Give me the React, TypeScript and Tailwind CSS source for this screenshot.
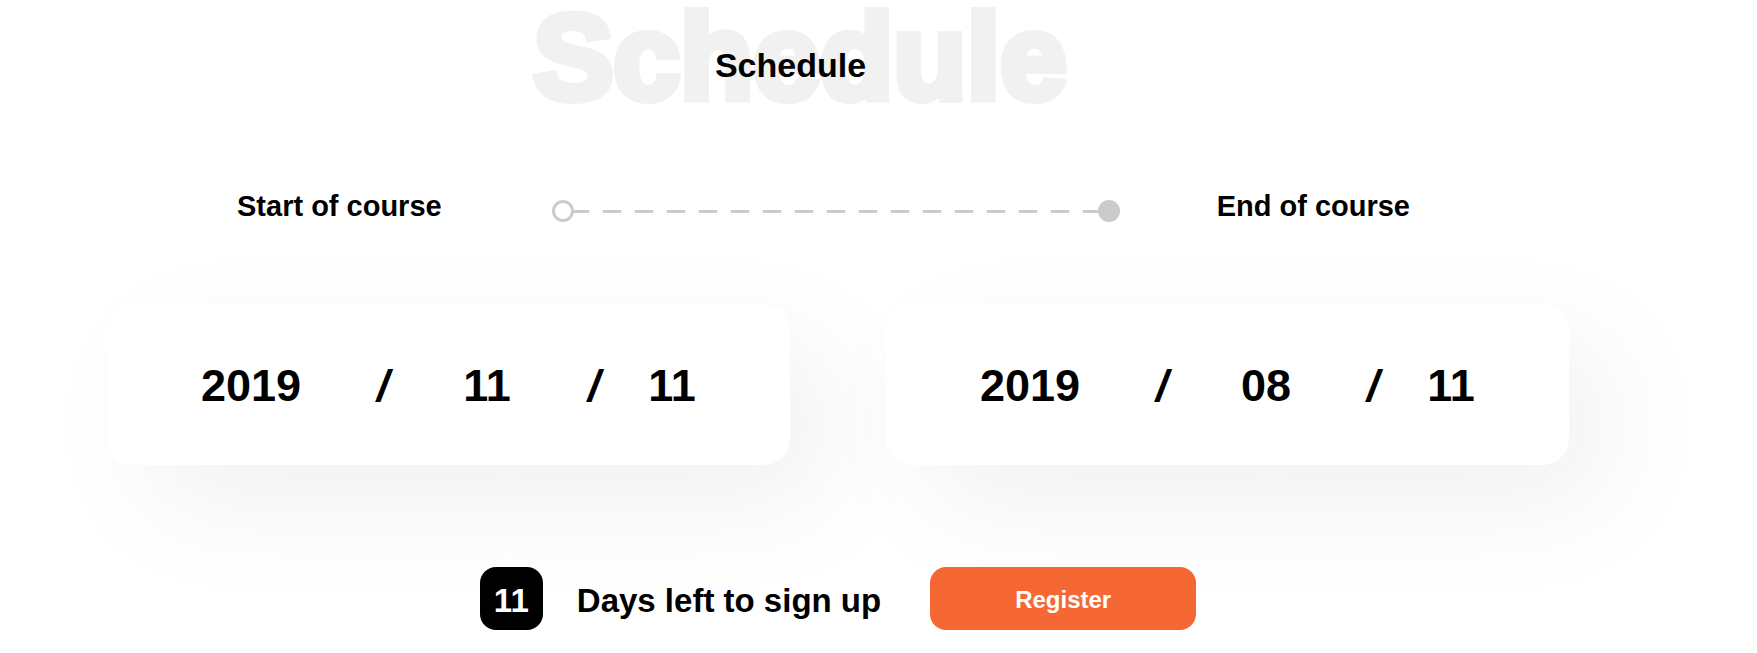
type CourseDate = { id: string; label: string; year: string; month: string; day: string };

const START: CourseDate = { id: "start", label: "Start of course", year: "2019", month: "11", day: "11" };
const END: CourseDate = { id: "end", label: "End of course", year: "2019", month: "08", day: "11" };

function Slash() {
  return <span className="italic">/</span>;
}

function DateCard({ date }: { date: CourseDate }) {
  return (
    <time
      dateTime={`${date.year}-${date.month}-${date.day}`}
      aria-labelledby={date.id}
      className="grid h-[161px] grid-cols-[164fr_100fr_108fr_106fr_50fr] items-center justify-items-center rounded-[26px] bg-white pl-[62px] pr-[93px] pt-[2px] text-[45px] leading-[52px] shadow-[40px_40px_120px_rgba(0,0,0,0.06)]"
    >
      <span>{date.year}</span>
      <Slash />
      <span>{date.month}</span>
      <Slash />
      <span>{date.day}</span>
    </time>
  );
}

function Timeline() {
  return (
    <div className="ml-[110px] mr-[97px] flex flex-1 items-center pt-[9px]" aria-hidden="true">
      <svg className="h-[22px] w-[22px] shrink-0" viewBox="0 0 22 22">
        <circle cx="11" cy="11" r="9.5" fill="none" stroke="#cbcbcb" strokeWidth="3" />
      </svg>
      <svg className="h-[22px] min-w-0 flex-1" width="100%">
        <line x1="-2" y1="11.5" x2="100%" y2="11.5" stroke="#cbcbcb" strokeWidth="3" strokeLinecap="round" strokeDasharray="16 16" />
      </svg>
      <svg className="h-[22px] w-[22px] shrink-0" viewBox="0 0 22 22">
        <circle cx="11" cy="11" r="11" fill="#cbcbcb" />
      </svg>
    </div>
  );
}

export default function App() {
  return (
    <main className="overflow-hidden bg-white pb-[22px] pl-[107px] pr-[188px] font-['Liberation_Sans',Arial,sans-serif] font-bold text-black">
      <header className="relative flex justify-center pr-[95px] pt-[45px]">
        <span
          aria-hidden="true"
          className="absolute inset-x-0 top-0 pr-[76px] text-center text-[120px] leading-[114px] text-[#f1f1f1] [-webkit-text-stroke:8px_#f1f1f1]"
        >
          Schedule
        </span>
        <h1 className="relative text-[34px] leading-[40px]">Schedule</h1>
      </header>

      <div className="mt-[101px] flex pl-[130px] pr-[159px] text-[29px] leading-[40px]">
        <h2 id={START.id}>{START.label}</h2>
        <Timeline />
        <h2 id={END.id}>{END.label}</h2>
      </div>

      <div className="mt-[78px] grid grid-cols-2 gap-24">
        <DateCard date={START} />
        <DateCard date={END} />
      </div>

      <div className="mt-[102px] flex items-center justify-center">
        <span className="flex h-[63px] w-[63px] items-center justify-center rounded-2xl bg-black pt-[4px] text-[33px] leading-[40px] text-white">
          11
        </span>
        <p className="ml-[34px] mr-[49px] pt-[4px] text-[33px] leading-[40px]">Days left to sign up</p>
        <button type="button" className="h-[63px] w-[266px] rounded-2xl bg-[#f56834] pt-[2px] text-[24px] leading-[32px] text-white">
          Register
        </button>
      </div>
    </main>
  );
}
